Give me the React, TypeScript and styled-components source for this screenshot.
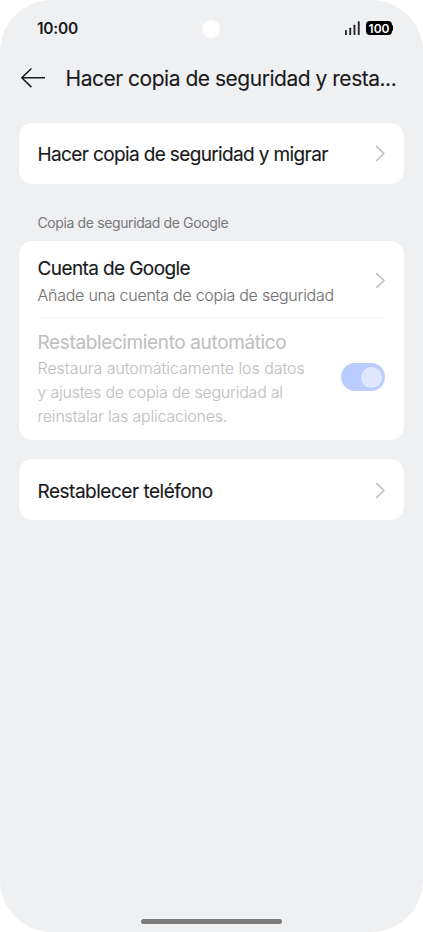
import React from "react";
import styled, { createGlobalStyle } from "styled-components";

const GlobalStyle = createGlobalStyle`
  *, *::before, *::after { box-sizing: border-box; }
  html, body { margin: 0; padding: 0; background: #fff; }
  body { font-family: Inter, "Liberation Sans", sans-serif; color: #191a1c; }
`;

const Screen = styled.div`
  display: flex;
  flex-direction: column;
  width: 423px;
  height: 932px;
  border-radius: 52px;
  background: #eff0f2;
  overflow: hidden;
`;

const StatusBar = styled.header`
  display: grid;
  grid-template-columns: 1fr 18px 1fr;
  align-items: center;
  height: 56px;
  padding: 0 30px 0 37px;
`;

const Clock = styled.time`
  padding-top: 1px;
  font-size: 15.5px;
  line-height: 20px;
  font-weight: 600;
  letter-spacing: -0.22px;
`;

const Camera = styled.span`
  width: 18px;
  height: 18px;
  margin-left: -4px;
  border-radius: 50%;
  background: #fff;
  margin-top: 1px;
`;

const StatusIcons = styled.div`
  display: flex;
  align-items: center;
  justify-content: flex-end;
  gap: 5.5px;
`;

const Battery = styled.span`
  display: flex;
  align-items: center;
`;

const BatteryBody = styled.span`
  width: 25.5px;
  height: 14px;
  border-radius: 4px;
  background: #000;
  color: #fff;
  font-size: 12px;
  line-height: 15px;
  font-weight: 600;
  text-align: center;
`;

const BatteryTip = styled.span`
  width: 1.2px;
  height: 6px;
  border-radius: 0 2px 2px 0;
  background: #000;
`;

const TitleBar = styled.div`
  display: flex;
  align-items: center;
  height: 44px;
  padding-left: 20px;
`;

const BackButton = styled.button`
  display: flex;
  width: 26px;
  height: 24px;
  margin-right: 19.5px;
  padding: 0;
  border: 0;
  background: none;
`;

const PageTitle = styled.h1`
  margin: 2px 0 0;
  font-size: 21px;
  line-height: 28px;
  font-weight: 400;
  letter-spacing: -0.48px;
  -webkit-text-stroke: 0.1px currentColor;
  white-space: nowrap;
`;

const Content = styled.main`
  flex: 1;
  padding: 22.67px 19px 0;
`;

const Card = styled.section<{ $gap?: number }>`
  margin-top: ${(p) => p.$gap ?? 0}px;
  padding: 0 19px 0 18.5px;
  border-radius: 13.5px;
  background: #fff;
`;

const Row = styled.div<{ $height: number; $divided?: boolean }>`
  display: flex;
  align-items: center;
  justify-content: space-between;
  height: ${(p) => p.$height}px;
  border-top: ${(p) => (p.$divided ? "1.33px solid #f4f4f5" : "0")};
`;

const RowText = styled.div<{ $shift?: number; $gap?: number }>`
  display: flex;
  flex-direction: column;
  margin-top: ${(p) => p.$shift ?? 0}px;
  gap: ${(p) => p.$gap ?? 0}px;
`;

const RowTitle = styled.h2<{ $disabled?: boolean; $spacing: number }>`
  margin: 0;
  font-size: 19px;
  line-height: 26px;
  font-weight: 400;
  letter-spacing: ${(p) => p.$spacing}px;
  -webkit-text-stroke: ${(p) => (p.$disabled ? 0.1 : 0.15)}px currentColor;
  color: ${(p) => (p.$disabled ? "#bfbfbf" : "#191a1c")};
  white-space: nowrap;
`;

const RowDetail = styled.p<{ $disabled?: boolean }>`
  margin: 0;
  font-size: 16px;
  line-height: 24px;
  font-weight: 300;
  letter-spacing: -0.25px;
  -webkit-text-stroke: 0.1px currentColor;
  color: ${(p) => (p.$disabled ? "#bfbfbf" : "#737373")};
  white-space: nowrap;
`;

const DetailLine = styled.span<{ $spacing: number }>`
  display: block;
  letter-spacing: ${(p) => p.$spacing}px;
`;

const SectionLabel = styled.h3`
  margin: 29px 0 8px 18.5px;
  font-size: 14px;
  line-height: 20px;
  font-weight: 400;
  letter-spacing: -0.38px;
  color: #77787a;
`;

const Switch = styled.button`
  display: flex;
  align-items: center;
  justify-content: flex-end;
  width: 44px;
  height: 28px;
  margin-bottom: 3px;
  padding: 0 3px 0 0;
  border: 0;
  border-radius: 14px;
  background: #bacdfe;
`;

const Knob = styled.span`
  width: 21.5px;
  height: 21.5px;
  border-radius: 50%;
  background: #e0e8ff;
`;

const HomeArea = styled.footer`
  display: flex;
  justify-content: center;
  height: 13px;
`;

const HomeIndicator = styled.span`
  width: 141px;
  height: 5px;
  border-radius: 2.5px;
  background: #7b7b7c;
`;

const ChevronIcon = styled.svg<{ $drop?: number }>`
  flex: none;
  margin-top: ${(p) => p.$drop ?? 0}px;
`;

const Chevron = ({ drop }: { drop?: number }) => (
  <ChevronIcon $drop={drop} width="10" height="17" viewBox="0 0 10 17" fill="none" aria-hidden="true">
    <path d="M1.2 1.1 9 8.5 1.2 15.9" stroke="#bdbdbe" strokeWidth="1.5" />
  </ChevronIcon>
);

const BackArrow = () => (
  <svg width="26" height="24" viewBox="0 0 26 24" fill="none" aria-hidden="true">
    <path d="M11.4 2.5 1.8 11.8l9.6 9.3M1.8 11.8H25" stroke="#191a1c" strokeWidth="1.5" />
  </svg>
);

const Signal = () => (
  <svg width="16" height="15" viewBox="0 0 16 15" aria-hidden="true">
    <g fill="#26282a">
      <rect x="0" y="9" width="1.9" height="5" rx=".6" />
      <rect x="4.3" y="6.7" width="1.9" height="7.3" rx=".6" />
      <rect x="8.5" y="3.7" width="1.9" height="10.3" rx=".6" />
      <rect x="12.8" y=".3" width="1.9" height="13.7" rx=".6" />
    </g>
  </svg>
);

export default function App() {
  return (
    <>
      <GlobalStyle />
      <Screen>
        <StatusBar>
          <Clock>10:00</Clock>
          <Camera />
          <StatusIcons>
            <Signal />
            <Battery>
              <BatteryBody>100</BatteryBody>
              <BatteryTip />
            </Battery>
          </StatusIcons>
        </StatusBar>
        <TitleBar>
          <BackButton aria-label="Atrás">
            <BackArrow />
          </BackButton>
          <PageTitle>Hacer copia de seguridad y resta...</PageTitle>
        </TitleBar>
        <Content>
          <Card>
            <Row $height={61}>
              <RowText $shift={3.2}>
                <RowTitle $spacing={-0.63}>Hacer copia de seguridad y migrar</RowTitle>
              </RowText>
              <Chevron />
            </Row>
          </Card>
          <SectionLabel>Copia de seguridad de Google</SectionLabel>
          <Card>
            <Row $height={76}>
              <RowText $shift={5.6} $gap={1.5}>
                <RowTitle $spacing={-0.6}>Cuenta de Google</RowTitle>
                <RowDetail>Añade una cuenta de copia de seguridad</RowDetail>
              </RowText>
              <Chevron drop={3} />
            </Row>
            <Row $height={123.5} $divided>
              <RowText>
                <RowTitle $disabled $spacing={-0.37}>Restablecimiento automático</RowTitle>
                <RowDetail $disabled>
                  <DetailLine $spacing={-0.05}>Restaura automáticamente los datos</DetailLine>
                  <DetailLine $spacing={-0.24}>y ajustes de copia de seguridad al</DetailLine>
                  <DetailLine $spacing={-0.2}>reinstalar las aplicaciones.</DetailLine>
                </RowDetail>
              </RowText>
              <Switch role="switch" aria-checked="true" aria-label="Restablecimiento automático" disabled>
                <Knob />
              </Switch>
            </Row>
          </Card>
          <Card $gap={19.3}>
            <Row $height={61}>
              <RowText $shift={3.2}>
                <RowTitle $spacing={-0.49}>Restablecer teléfono</RowTitle>
              </RowText>
              <Chevron drop={0.5} />
            </Row>
          </Card>
        </Content>
        <HomeArea>
          <HomeIndicator />
        </HomeArea>
      </Screen>
    </>
  );
}
